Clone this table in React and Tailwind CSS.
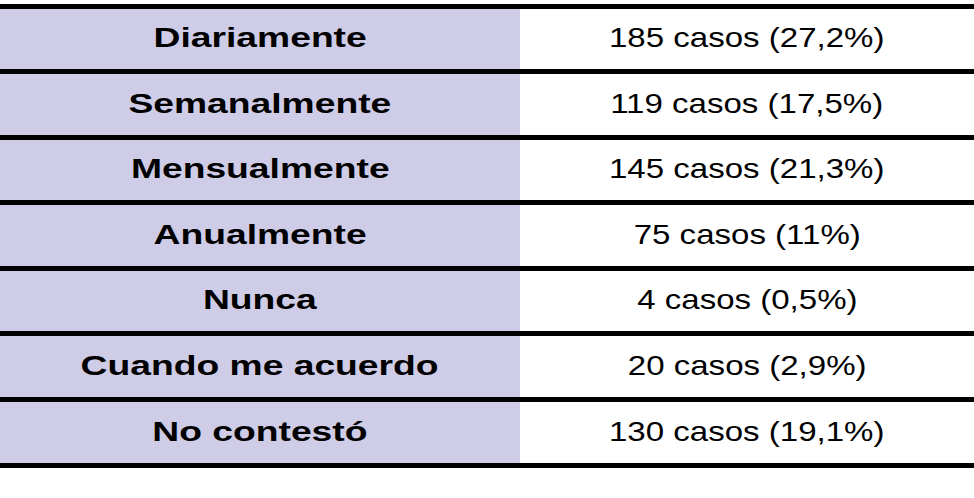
const filas = [
  { label: 'Diariamente', valor: '185 casos (27,2%)', alto: 'h-[65px]' },
  { label: 'Semanalmente', valor: '119 casos (17,5%)', alto: 'h-[66px]' },
  { label: 'Mensualmente', valor: '145 casos (21,3%)', alto: 'h-[65px]' },
  { label: 'Anualmente', valor: '75 casos (11%)', alto: 'h-[66px]' },
  { label: 'Nunca', valor: '4 casos (0,5%)', alto: 'h-[65px]' },
  { label: 'Cuando me acuerdo', valor: '20 casos (2,9%)', alto: 'h-[66px]' },
  { label: 'No contestó', valor: '130 casos (19,1%)', alto: 'h-[66px]' },
]

const App = () => {
  return (
    <div className="w-[974px] h-[498px] bg-white pt-[4px] font-['Liberation_Sans',Arial,sans-serif] text-black">
      <div className="border-t-[5px] border-black">
        {filas.map((fila) => (
          <div key={fila.label} className={`flex border-b-[5px] border-black ${fila.alto}`}>
            {/* Columna de frecuencia */}
            <div className="w-[520px] bg-[#cecce6] flex items-center justify-center pb-[2px]">
              <span className="text-[28px] leading-[32px] font-bold whitespace-nowrap scale-x-[1.33]">{fila.label}</span>
            </div>
            {/* Columna de casos */}
            <div className="flex-1 flex items-center justify-center pb-[2px]">
              <span className="text-[28px] leading-[32px] whitespace-nowrap scale-x-[1.18]">{fila.valor}</span>
            </div>
          </div>
        ))}
      </div>
    </div>
  )
}

export default App
